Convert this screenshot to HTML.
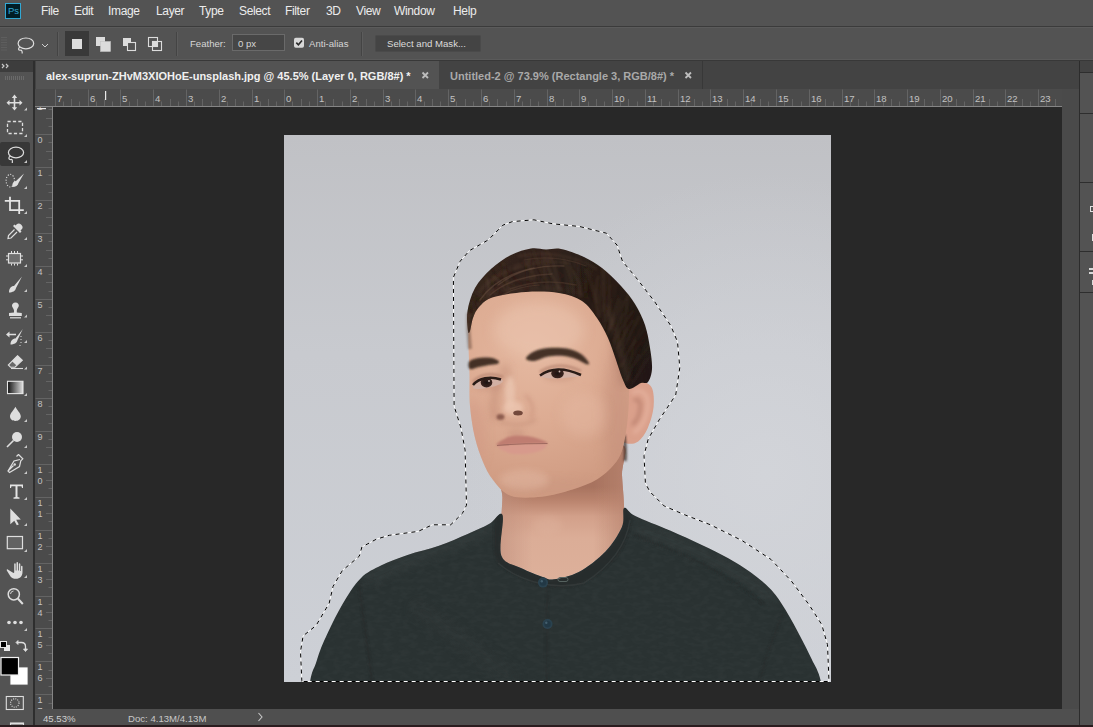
<!DOCTYPE html>
<html><head><meta charset="utf-8">
<style>
*{margin:0;padding:0;box-sizing:border-box}
html,body{width:1093px;height:727px;overflow:hidden;background:#535353;font-family:"Liberation Sans",sans-serif;position:relative}
.a{position:absolute}
.mi{position:absolute;top:4px;font-size:12px;letter-spacing:-0.35px;color:#ececec;white-space:pre;line-height:14px}
.t10{font-size:9.6px;white-space:pre;line-height:12px}
</style></head><body>
<!-- MENU BAR -->
<div class="a" style="left:0;top:0;width:1093px;height:26px;background:#535353"></div>
<div class="a" style="left:0;top:26px;width:1093px;height:1px;background:#3b3b3b"></div>
<div class="a" style="left:0;top:27px;width:1093px;height:1px;background:#5b5b5b"></div>
<div class="a" style="left:5px;top:3px;width:16px;height:16px;background:#001d26;border:1px solid #31a8d4"></div>
<div class="a" style="left:8px;top:5px;font-size:9.5px;color:#31a8d4;font-weight:400;line-height:11px">Ps</div>
<div class="mi" style="left:41px">File</div>
<div class="mi" style="left:74px">Edit</div>
<div class="mi" style="left:108px">Image</div>
<div class="mi" style="left:156px">Layer</div>
<div class="mi" style="left:199px">Type</div>
<div class="mi" style="left:239px">Select</div>
<div class="mi" style="left:285px">Filter</div>
<div class="mi" style="left:326px">3D</div>
<div class="mi" style="left:356px">View</div>
<div class="mi" style="left:394px">Window</div>
<div class="mi" style="left:453px">Help</div>

<!-- OPTIONS BAR -->
<svg class="a" style="left:0;top:27px" width="490" height="33" viewBox="0 27 490 33">
<g fill="#5e5e5e"><rect x="1" y="37" width="6" height="1"/><rect x="1" y="39.5" width="6" height="1"/><rect x="1" y="42" width="6" height="1"/><rect x="1" y="44.5" width="6" height="1"/><rect x="1" y="47" width="6" height="1"/><rect x="1" y="49.5" width="6" height="1"/></g>
<ellipse cx="25.9" cy="43.4" rx="7.8" ry="5.4" fill="none" stroke="#dedede" stroke-width="1.2"/>
<path d="M20,47 C17.8,48 18.2,50.5 20.5,50.2 C22,50 22.3,51.8 22.2,53.5" fill="none" stroke="#dedede" stroke-width="1.2"/>
<path d="M42,44 L45,47 L48,44" fill="none" stroke="#cfcfcf" stroke-width="1"/>
<rect x="57" y="32" width="1" height="24" fill="#444"/>
<rect x="58" y="32" width="1" height="24" fill="#5c5c5c"/>
<rect x="65" y="31" width="24" height="25" fill="#393939"/>
<rect x="72" y="39" width="10" height="10" fill="#dcdcdc"/>
<rect x="96" y="37" width="9" height="9" fill="#dcdcdc"/>
<rect x="100.5" y="41.5" width="10" height="10" fill="#dcdcdc" stroke="#c4c4c4" stroke-width="0.6"/>
<rect x="123" y="38" width="8" height="8" fill="#dcdcdc"/>
<rect x="127.5" y="42.5" width="8" height="8" fill="#535353" stroke="#dcdcdc" stroke-width="1.1"/>
<rect x="148.5" y="37.5" width="9" height="9" fill="none" stroke="#dcdcdc" stroke-width="1.1"/>
<rect x="152.5" y="41.5" width="9" height="9" fill="none" stroke="#dcdcdc" stroke-width="1.1"/>
<rect x="153" y="42" width="4" height="4" fill="#dcdcdc"/>
<rect x="176" y="32" width="1" height="24" fill="#444"/>
<rect x="177" y="32" width="1" height="24" fill="#5c5c5c"/>
<rect x="232.5" y="34.5" width="52" height="16" fill="#464646" stroke="#6a6a6a" stroke-width="1"/>
<rect x="294" y="37.8" width="10" height="10" rx="1.8" fill="#d8d8d8"/>
<path d="M296.3,42.6 L298.4,44.8 L302,40.5" fill="none" stroke="#2a2a2a" stroke-width="1.6"/>
<rect x="361" y="32" width="1" height="24" fill="#444"/>
<rect x="362" y="32" width="1" height="24" fill="#5c5c5c"/>
<rect x="375.5" y="35.5" width="105" height="16" rx="1" fill="#444444" stroke="#4a4a4a" stroke-width="1"/>
</svg>
<div class="a t10" style="left:190px;top:38px;color:#d6d6d6">Feather:</div>
<div class="a t10" style="left:238px;top:38px;color:#d6d6d6">0 px</div>
<div class="a t10" style="left:309px;top:38px;color:#d6d6d6">Anti-alias</div>
<div class="a t10" style="left:387px;top:38px;color:#dcdcdc">Select and Mask...</div>

<div class="a" style="left:0;top:59px;width:1093px;height:1px;background:#5a5a5a"></div>
<div class="a" style="left:0;top:60px;width:1093px;height:1px;background:#383838"></div>

<!-- TOOLBAR / LEFT PANEL -->
<div class="a" style="left:0;top:61px;width:33px;height:11px;background:#3f3f3f"></div>
<div class="a" style="left:33px;top:61px;width:2px;height:664px;background:#2e2e2e"></div>

<svg class="a" style="left:0;top:0" width="33" height="727" viewBox="0 0 33 727">
<defs>
<linearGradient id="gradtool" x1="0" y1="0" x2="1" y2="0"><stop offset="0" stop-color="#111"/><stop offset="1" stop-color="#e0e0e0"/></linearGradient>
<g id="tri"><path d="M0,3 L3,0 L3,3 Z" fill="#c8c8c8"/></g>
</defs>
<!-- panel header + grip -->
<rect x="0" y="61" width="33" height="11" fill="#3d3d3d"/>
<path d="M2,64 L4,66 L2,68 M6,64 L8,66 L6,68" stroke="#c8c8c8" stroke-width="1.2" fill="none"/>
<g fill="#6a6a6a"><rect x="5" y="76" width="1" height="4"/><rect x="7" y="76" width="1" height="4"/><rect x="9" y="76" width="1" height="4"/><rect x="11" y="76" width="1" height="4"/><rect x="13" y="76" width="1" height="4"/><rect x="15" y="76" width="1" height="4"/><rect x="17" y="76" width="1" height="4"/><rect x="19" y="76" width="1" height="4"/><rect x="21" y="76" width="1" height="4"/><rect x="23" y="76" width="1" height="4"/></g>
<g fill="#dedede" stroke="none">
<!-- move -->
<path d="M14.5,94.5 L11.8,98 L13.7,98 L13.7,102 L9.5,102 L9.5,100 L6.5,102.8 L9.5,105.6 L9.5,103.6 L13.7,103.6 L13.7,107.2 L11.8,107.2 L14.5,110.5 L17.2,107.2 L15.3,107.2 L15.3,103.6 L19.5,103.6 L19.5,105.6 L22.5,102.8 L19.5,100 L19.5,102 L15.3,102 L15.3,98 L17.2,98 Z"/>
</g>
<use href="#tri" x="24" y="107.5"/>
<!-- marquee -->
<rect x="7.5" y="121.5" width="15" height="12" fill="none" stroke="#dedede" stroke-width="1.3" stroke-dasharray="3.2 2.2"/>
<use href="#tri" x="24" y="134"/>
<!-- lasso selected -->
<rect x="0" y="142" width="30" height="24" rx="2" fill="#383838"/>
<ellipse cx="16" cy="152.5" rx="7.6" ry="5.3" fill="none" stroke="#dedede" stroke-width="1.2"/>
<path d="M10.5,156 C8,157 8.5,160 11,159.5 C12.5,159 12.5,161 12.3,163" fill="none" stroke="#dedede" stroke-width="1.2"/>
<use href="#tri" x="24" y="160"/>
<!-- quick select -->
<ellipse cx="10.3" cy="180.7" rx="4.2" ry="6.3" fill="none" stroke="#dedede" stroke-width="1.1" stroke-dasharray="1.1 1.6"/>
<path d="M24,173.5 L16,181 C13,181.5 12,184 12.5,187 C15.5,187 18,185.5 18.5,183 Z" fill="#dedede"/>
<use href="#tri" x="24" y="186"/>
<!-- crop -->
<path d="M4.8,200.8 L10,200.8 M10,196.8 L10,210.2 L20.8,210.2 M10,200.8 L19.2,200.8 L19.2,214 M19.2,210.2 L23.8,210.2" fill="none" stroke="#e4e4e4" stroke-width="1.8"/>
<use href="#tri" x="24" y="211"/>
<!-- eyedropper -->
<path d="M21.5,225 C23,226.5 23,228 21.5,229.5 L20.5,230.5 L21.5,231.5 L20,233 L13,226 L14.5,224.5 L15.5,225.5 L16.5,224.5 C18,223 19.5,223 21,224.5 Z" fill="#dedede"/>
<path d="M14.5,229.5 L8.5,235.5 L8,238.5 L11,238 L17,232" fill="none" stroke="#dedede" stroke-width="1.2"/>
<use href="#tri" x="24" y="237"/>
<!-- frame tool -->
<rect x="8.5" y="253.5" width="12" height="9.5" fill="#6e6e6e" stroke="#e0e0e0" stroke-width="1.2"/>
<path d="M11.5,251 V253 M14.5,251 V253 M17.5,251 V253 M11.5,263.5 V265.5 M14.5,263.5 V265.5 M17.5,263.5 V265.5 M6,256 H8 M6,259.8 H8 M21,256 H23 M21,259.8 H23" stroke="#e0e0e0" stroke-width="1"/>
<use href="#tri" x="24" y="264"/>
<!-- brush -->
<path d="M22,276.5 L14,286 C11,286 9,288.5 9,292.5 C12.5,292.5 15.5,291 16,288 Z" fill="#dedede"/>
<use href="#tri" x="24" y="289"/>
<!-- stamp -->
<path d="M15.5,302.5 C18,302.5 19,304.5 18.8,306 C18.5,307.5 17,308.5 16.8,310.5 L16.8,312.5 L21.8,313 L21.8,316 L9,316 L9,313 L14,312.5 L14,310.5 C13.8,308.5 12.2,307.5 12,306 C11.8,304.5 13,302.5 15.5,302.5 Z" fill="#dedede"/>
<rect x="10" y="317.2" width="11" height="1.2" fill="#dedede"/>
<use href="#tri" x="24" y="314.5"/>
<!-- history brush -->
<path d="M22.8,329 L15.5,338.5 C12.5,338.5 10.5,341 10.5,344.5 C14,344.5 17,343 17.5,340 Z" fill="#dedede"/>
<path d="M6,334.5 L9.5,331.5 L9.5,333.8 L16,333.8 L16,335.2 L9.5,335.2 L9.5,337.5 Z" fill="#dedede"/>
<path d="M21,336 V337 M21,339 V340 M21,342 V343 M20,345 V346" stroke="#dedede" stroke-width="1"/>
<use href="#tri" x="24" y="340"/>
<!-- eraser -->
<path d="M17.5,355.7 L22.3,360.2 L15,367.2 L10.5,367.2 L8.3,365 Z" fill="#6a6a6a" stroke="#dedede" stroke-width="1.1"/>
<path d="M17.5,355.7 L22.3,360.2 L16.5,365.6 L12,361.2 Z" fill="#dedede"/>
<path d="M11,368.5 L23,368.5" stroke="#dedede" stroke-width="1.1"/>
<use href="#tri" x="24" y="366.5"/>
<!-- gradient -->
<rect x="7.5" y="381.3" width="15.5" height="12.3" fill="url(#gradtool)" stroke="#e6e6e6" stroke-width="1.1"/>
<use href="#tri" x="24" y="393"/>
<!-- blur drop -->
<path d="M15.4,406.8 C17,410 20.8,413.5 20.8,416.3 C20.8,419.2 18.4,421 15.4,421 C12.4,421 10,419.2 10,416.3 C10,413.5 13.8,410 15.4,406.8 Z" fill="#dedede"/>
<use href="#tri" x="24" y="419"/>
<!-- dodge -->
<circle cx="17" cy="437" r="5" fill="#dedede"/>
<path d="M13.5,440.5 L7,447" stroke="#dedede" stroke-width="1.6"/>
<use href="#tri" x="24" y="445"/>
<!-- pen -->
<path d="M18.5,454.5 L22.8,458.8 L20.8,460.8 L19.5,466.5 L9.5,472.5 L8,471 L13.5,465.5 M8,471 L14,461 L20,459.5 M18.5,454.5 L16.5,456.5" fill="none" stroke="#dedede" stroke-width="1.2"/>
<circle cx="14.7" cy="464.5" r="1.2" fill="#dedede"/>
<use href="#tri" x="24" y="471"/>
<!-- type -->
<path d="M10,484.5 L23,484.5 L23,488 L22,488 L21.5,486.3 L17.5,486.3 L17.5,497 L19.5,497.5 L19.5,498.8 L13.5,498.8 L13.5,497.5 L15.5,497 L15.5,486.3 L11.5,486.3 L11,488 L10,488 Z" fill="#e4e4e4"/>
<use href="#tri" x="24" y="497"/>
<!-- path select -->
<path d="M10.3,508.5 L20.8,519.5 L16.2,519.8 L18.8,524.5 L16.8,525.3 L14.3,520.7 L10.3,524.2 Z" fill="#dedede"/>
<use href="#tri" x="24" y="523"/>
<!-- rectangle -->
<rect x="7.3" y="536.5" width="15.2" height="12.2" fill="#626262" stroke="#dedede" stroke-width="1.2"/>
<use href="#tri" x="24" y="549"/>
<!-- hand -->
<path d="M8.5,570 C7.5,568.8 6.5,569 6.8,570.5 L10.5,576.5 C11.8,578.2 13.5,578.8 16,578.8 C20,578.8 22.5,576.3 22.5,572 L22.5,566.5 C22.5,565.5 21,565.5 21,566.5 L21,571 L20.3,571 L20.3,564 C20.3,563 18.8,563 18.8,564 L18.8,570.5 L18,570.5 L18,562.8 C18,561.8 16.5,561.8 16.5,562.8 L16.5,570.5 L15.7,570.5 L15.7,564 C15.7,563 14.2,563 14.2,564 L14.2,572.5 L13.5,573 Z" fill="#dedede"/>
<use href="#tri" x="24" y="575"/>
<!-- zoom -->
<circle cx="13.8" cy="594.3" r="5.6" fill="none" stroke="#dedede" stroke-width="1.5"/>
<path d="M17.8,598.5 L22.8,604" stroke="#dedede" stroke-width="2"/>
<path d="M10.5,594 A3.3,3.3 0 0 1 13.5,591" fill="none" stroke="#dedede" stroke-width="0.9"/>
<!-- more -->
<circle cx="9" cy="622.5" r="1.8" fill="#dedede"/><circle cx="15" cy="622.5" r="1.8" fill="#dedede"/><circle cx="21" cy="622.5" r="1.8" fill="#dedede"/>
<use href="#tri" x="24" y="628"/>
<!-- default colors -->
<rect x="4" y="645" width="6" height="6" fill="#e8e8e8"/>
<rect x="0.5" y="641.5" width="6" height="6" fill="#000" stroke="#e8e8e8" stroke-width="1"/>
<!-- swap -->
<path d="M18,642.5 L21.5,642.5 Q25.5,642.5 25.5,646.5 L25.5,650" fill="none" stroke="#dedede" stroke-width="1.3"/>
<path d="M18,640.5 L16,642.5 L18,644.5 Z M23.5,649 L25.5,651.5 L27.5,649 Z" fill="#dedede" stroke="#dedede" stroke-width="0.8"/>
<!-- BG / FG -->
<rect x="10" y="667" width="18" height="18" fill="#ffffff" stroke="#5a5a5a" stroke-width="0.8"/>
<rect x="1" y="657.5" width="17.5" height="17.5" fill="#000" stroke="#f0f0f0" stroke-width="1.2"/>
<!-- quick mask -->
<rect x="6.3" y="696.5" width="17" height="13" fill="none" stroke="#dedede" stroke-width="1.1"/>
<circle cx="14.8" cy="703" r="4.2" fill="none" stroke="#dedede" stroke-width="1.1" stroke-dasharray="1 1.2"/>
<!-- bottom partial -->
<rect x="10.5" y="723" width="13" height="4" fill="none" stroke="#dedede" stroke-width="1.1"/>
<rect x="10.5" y="723" width="13" height="1.5" fill="#dedede"/>
</svg>

<!-- TAB BAR -->
<div class="a" style="left:35px;top:61px;width:1045px;height:28px;background:#434343"></div>
<div class="a" style="left:36px;top:61px;width:403px;height:28px;background:#535353"></div>
<div class="a" style="left:46px;top:70px;font-size:11px;font-weight:700;color:#f0f0f0;white-space:pre;line-height:13px">alex-suprun-ZHvM3XIOHoE-unsplash.jpg @ 45.5% (Layer 0, RGB/8#) *</div>
<div class="a" style="left:450px;top:70px;font-size:11px;font-weight:700;color:#a9a9a9;white-space:pre;line-height:13px">Untitled-2 @ 73.9% (Rectangle 3, RGB/8#) *</div>
<div class="a" style="left:702px;top:61px;width:1px;height:28px;background:#383838"></div>

<svg class="a" style="left:415px;top:66px" width="290" height="18" viewBox="415 66 290 18">
<path d="M422.5,72.5 L428,78 M428,72.5 L422.5,78" stroke="#bdbdbd" stroke-width="1.8"/>
<path d="M685.5,72.5 L691,78 M691,72.5 L685.5,78" stroke="#bdbdbd" stroke-width="1.8"/>
</svg>
<!-- RULERS -->
<!-- PASTEBOARD -->
<div class="a" style="left:53px;top:107px;width:1009px;height:602px;background:#282828"></div>
<!-- RULERS_GEN -->
<svg class="a" style="left:35px;top:89px" width="1027" height="18" viewBox="35 89 1027 18">
<rect x="35" y="89" width="1027" height="17" fill="#4b4b4b"/>
<rect x="35" y="106" width="1027" height="1" fill="#858585"/>
<path d="M55.5,89.5 V106 M63.5,101.5 V106 M71.5,99 V106 M79.5,101.5 V106 M88.5,89.5 V106 M96.5,101.5 V106 M104.5,99 V106 M112.5,101.5 V106 M120.5,89.5 V106 M129.5,101.5 V106 M137.5,99 V106 M145.5,101.5 V106 M153.5,89.5 V106 M161.5,101.5 V106 M170.5,99 V106 M178.5,101.5 V106 M186.5,89.5 V106 M194.5,101.5 V106 M202.5,99 V106 M211.5,101.5 V106 M219.5,89.5 V106 M227.5,101.5 V106 M235.5,99 V106 M243.5,101.5 V106 M252.5,89.5 V106 M260.5,101.5 V106 M268.5,99 V106 M276.5,101.5 V106 M284.5,89.5 V106 M292.5,101.5 V106 M301.5,99 V106 M309.5,101.5 V106 M317.5,89.5 V106 M325.5,101.5 V106 M333.5,99 V106 M342.5,101.5 V106 M350.5,89.5 V106 M358.5,101.5 V106 M366.5,99 V106 M374.5,101.5 V106 M383.5,89.5 V106 M391.5,101.5 V106 M399.5,99 V106 M407.5,101.5 V106 M415.5,89.5 V106 M424.5,101.5 V106 M432.5,99 V106 M440.5,101.5 V106 M448.5,89.5 V106 M456.5,101.5 V106 M465.5,99 V106 M473.5,101.5 V106 M481.5,89.5 V106 M489.5,101.5 V106 M497.5,99 V106 M506.5,101.5 V106 M514.5,89.5 V106 M522.5,101.5 V106 M530.5,99 V106 M538.5,101.5 V106 M547.5,89.5 V106 M555.5,101.5 V106 M563.5,99 V106 M571.5,101.5 V106 M579.5,89.5 V106 M588.5,101.5 V106 M596.5,99 V106 M604.5,101.5 V106 M612.5,89.5 V106 M620.5,101.5 V106 M628.5,99 V106 M637.5,101.5 V106 M645.5,89.5 V106 M653.5,101.5 V106 M661.5,99 V106 M669.5,101.5 V106 M678.5,89.5 V106 M686.5,101.5 V106 M694.5,99 V106 M702.5,101.5 V106 M710.5,89.5 V106 M719.5,101.5 V106 M727.5,99 V106 M735.5,101.5 V106 M743.5,89.5 V106 M751.5,101.5 V106 M760.5,99 V106 M768.5,101.5 V106 M776.5,89.5 V106 M784.5,101.5 V106 M792.5,99 V106 M801.5,101.5 V106 M809.5,89.5 V106 M817.5,101.5 V106 M825.5,99 V106 M833.5,101.5 V106 M842.5,89.5 V106 M850.5,101.5 V106 M858.5,99 V106 M866.5,101.5 V106 M874.5,89.5 V106 M883.5,101.5 V106 M891.5,99 V106 M899.5,101.5 V106 M907.5,89.5 V106 M915.5,101.5 V106 M924.5,99 V106 M932.5,101.5 V106 M940.5,89.5 V106 M948.5,101.5 V106 M956.5,99 V106 M964.5,101.5 V106 M973.5,89.5 V106 M981.5,101.5 V106 M989.5,99 V106 M997.5,101.5 V106 M1005.5,89.5 V106 M1014.5,101.5 V106 M1022.5,99 V106 M1030.5,101.5 V106 M1038.5,89.5 V106 M1046.5,101.5 V106 M1055.5,99 V106" stroke="#646464" stroke-width="1"/>
<text x="57" y="102" font-size="9.6" fill="#c2c2c2" font-family="Liberation Sans">7</text>
<text x="90" y="102" font-size="9.6" fill="#c2c2c2" font-family="Liberation Sans">6</text>
<text x="122" y="102" font-size="9.6" fill="#c2c2c2" font-family="Liberation Sans">5</text>
<text x="155" y="102" font-size="9.6" fill="#c2c2c2" font-family="Liberation Sans">4</text>
<text x="188" y="102" font-size="9.6" fill="#c2c2c2" font-family="Liberation Sans">3</text>
<text x="221" y="102" font-size="9.6" fill="#c2c2c2" font-family="Liberation Sans">2</text>
<text x="254" y="102" font-size="9.6" fill="#c2c2c2" font-family="Liberation Sans">1</text>
<text x="286" y="102" font-size="9.6" fill="#c2c2c2" font-family="Liberation Sans">0</text>
<text x="319" y="102" font-size="9.6" fill="#c2c2c2" font-family="Liberation Sans">1</text>
<text x="352" y="102" font-size="9.6" fill="#c2c2c2" font-family="Liberation Sans">2</text>
<text x="385" y="102" font-size="9.6" fill="#c2c2c2" font-family="Liberation Sans">3</text>
<text x="417" y="102" font-size="9.6" fill="#c2c2c2" font-family="Liberation Sans">4</text>
<text x="450" y="102" font-size="9.6" fill="#c2c2c2" font-family="Liberation Sans">5</text>
<text x="483" y="102" font-size="9.6" fill="#c2c2c2" font-family="Liberation Sans">6</text>
<text x="516" y="102" font-size="9.6" fill="#c2c2c2" font-family="Liberation Sans">7</text>
<text x="549" y="102" font-size="9.6" fill="#c2c2c2" font-family="Liberation Sans">8</text>
<text x="581" y="102" font-size="9.6" fill="#c2c2c2" font-family="Liberation Sans">9</text>
<text x="614" y="102" font-size="9.6" fill="#c2c2c2" font-family="Liberation Sans">10</text>
<text x="647" y="102" font-size="9.6" fill="#c2c2c2" font-family="Liberation Sans">11</text>
<text x="680" y="102" font-size="9.6" fill="#c2c2c2" font-family="Liberation Sans">12</text>
<text x="712" y="102" font-size="9.6" fill="#c2c2c2" font-family="Liberation Sans">13</text>
<text x="745" y="102" font-size="9.6" fill="#c2c2c2" font-family="Liberation Sans">14</text>
<text x="778" y="102" font-size="9.6" fill="#c2c2c2" font-family="Liberation Sans">15</text>
<text x="811" y="102" font-size="9.6" fill="#c2c2c2" font-family="Liberation Sans">16</text>
<text x="844" y="102" font-size="9.6" fill="#c2c2c2" font-family="Liberation Sans">17</text>
<text x="876" y="102" font-size="9.6" fill="#c2c2c2" font-family="Liberation Sans">18</text>
<text x="909" y="102" font-size="9.6" fill="#c2c2c2" font-family="Liberation Sans">19</text>
<text x="942" y="102" font-size="9.6" fill="#c2c2c2" font-family="Liberation Sans">20</text>
<text x="975" y="102" font-size="9.6" fill="#c2c2c2" font-family="Liberation Sans">21</text>
<text x="1007" y="102" font-size="9.6" fill="#c2c2c2" font-family="Liberation Sans">22</text>
<text x="1040" y="102" font-size="9.6" fill="#c2c2c2" font-family="Liberation Sans">23</text>
<rect x="105" y="91" width="1.2" height="9" fill="#e8e8e8"/>
</svg>
<svg class="a" style="left:35px;top:107px" width="18" height="602" viewBox="35 107 18 602">
<rect x="35" y="107" width="17" height="602" fill="#4b4b4b"/>
<rect x="52" y="107" width="1" height="602" fill="#858585"/>
<path d="M48.5,109.5 H52 M46,118.5 H52 M48.5,126.5 H52 M35.5,134.5 H52 M48.5,142.5 H52 M46,151.5 H52 M48.5,159.5 H52 M35.5,167.5 H52 M48.5,175.5 H52 M46,184.5 H52 M48.5,192.5 H52 M35.5,200.5 H52 M48.5,208.5 H52 M46,217.5 H52 M48.5,225.5 H52 M35.5,233.5 H52 M48.5,241.5 H52 M46,250.5 H52 M48.5,258.5 H52 M35.5,266.5 H52 M48.5,274.5 H52 M46,282.5 H52 M48.5,291.5 H52 M35.5,299.5 H52 M48.5,307.5 H52 M46,315.5 H52 M48.5,324.5 H52 M35.5,332.5 H52 M48.5,340.5 H52 M46,348.5 H52 M48.5,357.5 H52 M35.5,365.5 H52 M48.5,373.5 H52 M46,381.5 H52 M48.5,390.5 H52 M35.5,398.5 H52 M48.5,406.5 H52 M46,414.5 H52 M48.5,423.5 H52 M35.5,431.5 H52 M48.5,439.5 H52 M46,447.5 H52 M48.5,455.5 H52 M35.5,464.5 H52 M48.5,472.5 H52 M46,480.5 H52 M48.5,488.5 H52 M35.5,497.5 H52 M48.5,505.5 H52 M46,513.5 H52 M48.5,521.5 H52 M35.5,530.5 H52 M48.5,538.5 H52 M46,546.5 H52 M48.5,554.5 H52 M35.5,563.5 H52 M48.5,571.5 H52 M46,579.5 H52 M48.5,587.5 H52 M35.5,596.5 H52 M48.5,604.5 H52 M46,612.5 H52 M48.5,620.5 H52 M35.5,628.5 H52 M48.5,637.5 H52 M46,645.5 H52 M48.5,653.5 H52 M35.5,661.5 H52 M48.5,670.5 H52 M46,678.5 H52 M48.5,686.5 H52 M35.5,694.5 H52 M48.5,703.5 H52" stroke="#646464" stroke-width="1"/>
<text x="37.5" y="110.0" font-size="9" fill="#c2c2c2" font-family="Liberation Sans">1</text>
<text x="37.5" y="143.0" font-size="9" fill="#c2c2c2" font-family="Liberation Sans">0</text>
<text x="37.5" y="176.0" font-size="9" fill="#c2c2c2" font-family="Liberation Sans">1</text>
<text x="37.5" y="209.0" font-size="9" fill="#c2c2c2" font-family="Liberation Sans">2</text>
<text x="37.5" y="242.0" font-size="9" fill="#c2c2c2" font-family="Liberation Sans">3</text>
<text x="37.5" y="275.0" font-size="9" fill="#c2c2c2" font-family="Liberation Sans">4</text>
<text x="37.5" y="308.0" font-size="9" fill="#c2c2c2" font-family="Liberation Sans">5</text>
<text x="37.5" y="341.0" font-size="9" fill="#c2c2c2" font-family="Liberation Sans">6</text>
<text x="37.5" y="374.0" font-size="9" fill="#c2c2c2" font-family="Liberation Sans">7</text>
<text x="37.5" y="407.0" font-size="9" fill="#c2c2c2" font-family="Liberation Sans">8</text>
<text x="37.5" y="440.0" font-size="9" fill="#c2c2c2" font-family="Liberation Sans">9</text>
<text x="37.5" y="473.0" font-size="9" fill="#c2c2c2" font-family="Liberation Sans">1</text>
<text x="37.5" y="483.5" font-size="9" fill="#c2c2c2" font-family="Liberation Sans">0</text>
<text x="37.5" y="506.0" font-size="9" fill="#c2c2c2" font-family="Liberation Sans">1</text>
<text x="37.5" y="516.5" font-size="9" fill="#c2c2c2" font-family="Liberation Sans">1</text>
<text x="37.5" y="539.0" font-size="9" fill="#c2c2c2" font-family="Liberation Sans">1</text>
<text x="37.5" y="549.5" font-size="9" fill="#c2c2c2" font-family="Liberation Sans">2</text>
<text x="37.5" y="572.0" font-size="9" fill="#c2c2c2" font-family="Liberation Sans">1</text>
<text x="37.5" y="582.5" font-size="9" fill="#c2c2c2" font-family="Liberation Sans">3</text>
<text x="37.5" y="605.0" font-size="9" fill="#c2c2c2" font-family="Liberation Sans">1</text>
<text x="37.5" y="615.5" font-size="9" fill="#c2c2c2" font-family="Liberation Sans">4</text>
<text x="37.5" y="637.0" font-size="9" fill="#c2c2c2" font-family="Liberation Sans">1</text>
<text x="37.5" y="647.5" font-size="9" fill="#c2c2c2" font-family="Liberation Sans">5</text>
<text x="37.5" y="670.0" font-size="9" fill="#c2c2c2" font-family="Liberation Sans">1</text>
<text x="37.5" y="680.5" font-size="9" fill="#c2c2c2" font-family="Liberation Sans">6</text>
<text x="37.5" y="703.0" font-size="9" fill="#c2c2c2" font-family="Liberation Sans">1</text>
<text x="37.5" y="713.5" font-size="9" fill="#c2c2c2" font-family="Liberation Sans">7</text>
<rect x="37" y="108" width="9" height="1.2" fill="#e8e8e8"/>
</svg>
<!-- /RULERS_GEN -->



<!-- scroll col -->
<div class="a" style="left:1062px;top:89px;width:17px;height:620px;background:#4a4a4a"></div>
<div class="a" style="left:1079px;top:61px;width:1px;height:664px;background:#2c2c2c"></div>
<div class="a" style="left:1080px;top:61px;width:13px;height:664px;background:#535353"></div>
<div class="a" style="left:1080px;top:61px;width:13px;height:11px;background:#434343"></div>
<div class="a" style="left:1080px;top:72px;width:13px;height:1px;background:#2e2e2e"></div>
<div class="a" style="left:1080px;top:113px;width:13px;height:1px;background:#2e2e2e"></div>
<div class="a" style="left:1080px;top:182px;width:13px;height:1px;background:#2e2e2e"></div>
<div class="a" style="left:1080px;top:251px;width:13px;height:1px;background:#2e2e2e"></div>
<div class="a" style="left:1080px;top:292px;width:13px;height:1px;background:#2e2e2e"></div>
<div class="a" style="left:1090px;top:206px;width:3px;height:6px;border:1.2px solid #e0e0e0;border-right:none"></div>
<div class="a" style="left:1092px;top:234px;width:1px;height:7px;background:#e0e0e0"></div>
<div class="a" style="left:1089px;top:268px;width:4px;height:1.5px;background:#d8d8d8"></div>
<div class="a" style="left:1089px;top:272px;width:4px;height:1.5px;background:#d8d8d8"></div>
<div class="a" style="left:1092px;top:280px;width:1px;height:5px;background:#d8d8d8"></div>

<!-- STATUS BAR -->
<div class="a" style="left:35px;top:709px;width:1044px;height:16px;background:#4f4f4f"></div>
<div class="a" style="left:0;top:725px;width:1093px;height:2px;background:#2a1c1e"></div>
<div class="a t10" style="left:43px;top:713px;color:#d0d0d0">45.53%</div>
<div class="a t10" style="left:128px;top:713px;color:#c8c8c8">Doc: 4.13M/4.13M</div>

<svg class="a" style="left:250px;top:709px" width="30" height="16" viewBox="250 709 30 16">
<path d="M258.5,713 L262,717 L258.5,721" fill="none" stroke="#c8c8c8" stroke-width="1.1"/>
</svg>
<!-- PHOTO -->
<svg class="a" style="left:284px;top:135px" width="547" height="547" viewBox="0 0 547 547">
<defs>
<linearGradient id="bg" x1="0" y1="0" x2="0" y2="1">
<stop offset="0" stop-color="#c0c1c5"/><stop offset="0.4" stop-color="#c8cacf"/><stop offset="1" stop-color="#cdd0d6"/>
</linearGradient>
<radialGradient id="bgr" cx="0.88" cy="0.62" r="0.55">
<stop offset="0" stop-color="#d3d5da" stop-opacity="0.9"/><stop offset="1" stop-color="#d3d5da" stop-opacity="0"/>
</radialGradient>
<linearGradient id="neckg" gradientUnits="userSpaceOnUse" x1="0" y1="352" x2="0" y2="444">
<stop offset="0" stop-color="#a8735f"/><stop offset="0.15" stop-color="#ba846e"/><stop offset="0.32" stop-color="#d2a08a"/><stop offset="0.55" stop-color="#dbad97"/><stop offset="1" stop-color="#ddb09a"/>
</linearGradient>
<linearGradient id="neckside" gradientUnits="userSpaceOnUse" x1="218" y1="0" x2="340" y2="0">
<stop offset="0" stop-color="#c0907d" stop-opacity="0.6"/><stop offset="0.25" stop-color="#c0907d" stop-opacity="0"/><stop offset="0.75" stop-color="#b98570" stop-opacity="0"/><stop offset="1" stop-color="#b98570" stop-opacity="0.7"/>
</linearGradient>
<radialGradient id="faceg" gradientUnits="userSpaceOnUse" cx="250" cy="215" r="140">
<stop offset="0" stop-color="#e5b9a1"/><stop offset="0.5" stop-color="#ddac93"/><stop offset="1" stop-color="#d09c83"/>
</radialGradient>
<linearGradient id="hairg" gradientUnits="userSpaceOnUse" x1="200" y1="120" x2="360" y2="240">
<stop offset="0" stop-color="#36261f"/><stop offset="0.5" stop-color="#2b1f19"/><stop offset="1" stop-color="#231914"/>
</linearGradient>
<radialGradient id="eyeg"><stop offset="0" stop-color="#1e1210"/><stop offset="1" stop-color="#3a2520"/></radialGradient>
<clipPath id="faceclip"><path d="M186.0,185.0 C182.8,198.3 185.5,225.7 185.5,240.0 C185.5,254.3 185.1,260.7 186.0,271.0 C186.9,281.3 188.6,292.7 190.8,302.0 C193.0,311.3 196.0,319.8 199.0,327.0 C202.0,334.2 204.4,339.4 209.0,345.0 C213.6,350.6 218.5,357.9 226.6,360.7 C234.7,363.5 247.3,362.7 257.6,361.7 C267.9,360.7 279.2,357.4 288.5,354.5 C297.8,351.6 306.4,348.3 313.3,344.2 C320.2,340.1 325.7,334.6 329.8,329.8 C333.9,325.0 335.8,321.9 338.0,315.3 C340.2,308.7 341.8,299.2 343.0,290.0 C344.2,280.8 344.8,272.5 345.0,260.0 C345.2,247.5 346.5,230.0 344.0,215.0 C341.5,200.0 342.3,180.8 330.0,170.0 C317.7,159.2 290.8,151.7 270.0,150.0 C249.2,148.3 219.0,154.2 205.0,160.0 C191.0,165.8 189.2,171.7 186.0,185.0 Z"/></clipPath>
<clipPath id="shirtclip"><path d="M20.0,600.0 C-22.3,587.8 24.0,559.0 26.0,547.0 C28.0,535.0 29.7,534.8 32.0,528.0 C34.3,521.2 35.6,515.9 40.0,506.1 C44.4,496.4 52.2,479.9 58.3,469.5 C64.4,459.1 70.1,449.9 76.6,443.4 C83.1,436.9 89.7,434.2 97.5,430.3 C105.3,426.4 114.0,423.2 123.6,419.9 C133.2,416.6 145.0,414.2 155.0,410.7 C165.0,407.2 175.4,402.6 183.7,399.0 C192.0,395.4 199.2,392.2 205.0,389.0 C210.8,385.8 216.4,374.8 218.5,380.0 C220.6,385.2 214.2,411.7 217.3,420.5 C220.4,429.3 229.9,429.3 237.0,432.9 C244.1,436.5 254.1,440.3 259.6,442.2 C265.1,444.1 264.1,445.2 270.0,444.3 C275.9,443.4 286.1,441.6 294.7,437.0 C303.3,432.4 314.3,423.9 321.5,416.4 C328.7,408.8 334.9,398.9 338.0,391.7 C341.1,384.5 337.9,374.9 340.1,373.1 C342.3,371.3 343.7,377.4 351.3,381.1 C358.9,384.9 374.9,390.8 386.0,395.6 C397.1,400.4 408.2,405.4 417.8,410.0 C427.4,414.6 435.6,418.4 443.8,423.0 C452.0,427.6 459.7,432.2 466.9,437.5 C474.1,442.8 481.3,448.6 487.1,454.8 C492.9,461.1 496.8,467.3 501.6,475.0 C506.4,482.7 511.7,492.8 516.0,501.0 C520.3,509.2 524.1,516.4 527.6,524.1 C531.1,531.8 534.1,534.4 537.0,547.0 C539.9,559.6 587.8,587.8 545.0,600.0 C502.2,612.2 367.5,620.0 280.0,620.0 C192.5,620.0 62.3,612.2 20.0,600.0 Z"/></clipPath>
<clipPath id="hairclip"><path d="M184.0,196.0 C183.6,192.7 182.3,183.2 183.5,176.0 C184.7,168.8 187.1,160.0 191.0,153.0 C194.9,146.0 201.0,139.5 207.0,134.0 C213.0,128.5 220.3,123.4 227.0,120.0 C233.7,116.6 241.2,114.4 247.0,113.5 C252.8,112.6 257.0,114.4 262.0,114.5 C267.0,114.6 270.7,112.8 277.0,114.0 C283.3,115.2 293.2,118.8 300.0,122.0 C306.8,125.2 311.8,128.2 318.0,133.0 C324.2,137.8 331.5,145.0 337.0,151.0 C342.5,157.0 347.0,162.5 351.0,169.0 C355.0,175.5 358.5,182.7 361.0,190.0 C363.5,197.3 364.8,205.7 366.0,213.0 C367.2,220.3 368.3,228.3 368.0,234.0 C367.7,239.7 365.8,244.7 364.0,247.0 C362.2,249.3 360.2,246.8 357.0,248.0 C353.8,249.2 348.0,254.5 345.0,254.0 C342.0,253.5 341.2,249.8 339.0,245.0 C336.8,240.2 334.5,232.0 332.0,225.0 C329.5,218.0 327.2,210.0 324.0,203.0 C320.8,196.0 317.3,189.2 313.0,183.0 C308.7,176.8 304.3,170.2 298.0,166.0 C291.7,161.8 284.3,159.5 275.0,158.0 C265.7,156.5 253.0,156.3 242.0,157.0 C231.0,157.7 216.8,159.7 209.0,162.2 C201.2,164.7 198.3,168.5 195.0,172.0 C191.7,175.5 190.5,179.0 189.0,183.0 C187.5,187.0 186.8,193.8 186.0,196.0 C185.2,198.2 184.4,199.3 184.0,196.0 Z"/></clipPath>
<filter id="noise" x="0" y="0" width="100%" height="100%"><feTurbulence type="fractalNoise" baseFrequency="0.12 0.25" numOctaves="2" seed="3"/><feColorMatrix type="matrix" values="0 0 0 0 0.5  0 0 0 0 0.55  0 0 0 0 0.56  0 0 0 1.6 -0.55"/></filter>
<filter id="b05" x="-20%" y="-20%" width="140%" height="140%"><feGaussianBlur stdDeviation="0.5"/></filter>
<filter id="b1" filterUnits="userSpaceOnUse" x="-20" y="-20" width="587" height="587"><feGaussianBlur stdDeviation="0.8"/></filter>
<filter id="b2" filterUnits="userSpaceOnUse" x="-20" y="-20" width="587" height="587"><feGaussianBlur stdDeviation="2"/></filter>
<filter id="b3" filterUnits="userSpaceOnUse" x="-20" y="-20" width="587" height="587"><feGaussianBlur stdDeviation="3.5"/></filter>
<filter id="b4" filterUnits="userSpaceOnUse" x="-20" y="-20" width="587" height="587"><feGaussianBlur stdDeviation="6"/></filter>
</defs>
<rect width="547" height="547" fill="url(#bg)"/>
<rect width="547" height="547" fill="url(#bgr)"/>
<!-- neck -->
<path d="M218.4,340.0 C208.1,343.0 218.6,349.4 218.4,362.8 C218.2,376.2 214.2,408.8 217.3,420.5 C220.4,432.2 229.9,429.3 237.0,432.9 C244.1,436.5 254.1,440.3 259.6,442.2 C265.1,444.1 264.1,445.2 270.0,444.3 C275.9,443.4 286.1,441.6 294.7,437.0 C303.3,432.4 314.3,423.9 321.5,416.4 C328.7,408.8 334.9,398.9 338.0,391.7 C341.1,384.5 340.1,381.7 340.1,373.1 C340.1,364.5 338.5,350.5 338.0,340.0 C337.5,329.5 346.7,309.2 337.0,310.0 C327.3,310.8 299.8,340.0 280.0,345.0 C260.2,350.0 228.7,337.0 218.4,340.0 Z" fill="url(#neckg)" filter="url(#b05)"/>
<path d="M218.4,340.0 C208.1,343.0 218.6,349.4 218.4,362.8 C218.2,376.2 214.2,408.8 217.3,420.5 C220.4,432.2 229.9,429.3 237.0,432.9 C244.1,436.5 254.1,440.3 259.6,442.2 C265.1,444.1 264.1,445.2 270.0,444.3 C275.9,443.4 286.1,441.6 294.7,437.0 C303.3,432.4 314.3,423.9 321.5,416.4 C328.7,408.8 334.9,398.9 338.0,391.7 C341.1,384.5 340.1,381.7 340.1,373.1 C340.1,364.5 338.5,350.5 338.0,340.0 C337.5,329.5 346.7,309.2 337.0,310.0 C327.3,310.8 299.8,340.0 280.0,345.0 C260.2,350.0 228.7,337.0 218.4,340.0 Z" fill="url(#neckside)" filter="url(#b05)"/>
<ellipse cx="264" cy="390" rx="14" ry="9" fill="#e2b8a3" opacity="0.3" filter="url(#b3)"/>
<!-- ear -->
<path d="M340.7,266.0 C341.7,258.0 342.0,255.7 344.6,252.5 C347.2,249.3 352.2,246.7 356.1,246.7 C360.0,246.7 365.4,248.3 367.7,252.5 C369.9,256.7 370.2,265.1 369.6,271.8 C369.0,278.5 366.4,287.1 363.8,292.9 C361.2,298.7 357.7,303.8 354.2,306.4 C350.7,309.0 345.2,309.3 342.6,308.4 C340.0,307.4 339.1,307.8 338.8,300.7 C338.5,293.6 339.7,274.0 340.7,266.0 Z" fill="#daa08b" filter="url(#b05)"/>
<path d="M348,258 C357,253 364,258 364,270 C363,282 358,292 350,298" stroke="#e6b4a0" stroke-width="3" fill="none" filter="url(#b2)"/>
<path d="M350,266 C354,262 357,266 356,274 C355,282 352,287 348,290" stroke="#b57c6a" stroke-width="2.5" fill="none" filter="url(#b2)"/>
<path d="M340,300 C341,308 342,316 341,326" stroke="#3a2a24" stroke-width="3" fill="none" opacity="0.8" filter="url(#b1)"/>
<!-- face -->
<path d="M186.0,185.0 C182.8,198.3 185.5,225.7 185.5,240.0 C185.5,254.3 185.1,260.7 186.0,271.0 C186.9,281.3 188.6,292.7 190.8,302.0 C193.0,311.3 196.0,319.8 199.0,327.0 C202.0,334.2 204.4,339.4 209.0,345.0 C213.6,350.6 218.5,357.9 226.6,360.7 C234.7,363.5 247.3,362.7 257.6,361.7 C267.9,360.7 279.2,357.4 288.5,354.5 C297.8,351.6 306.4,348.3 313.3,344.2 C320.2,340.1 325.7,334.6 329.8,329.8 C333.9,325.0 335.8,321.9 338.0,315.3 C340.2,308.7 341.8,299.2 343.0,290.0 C344.2,280.8 344.8,272.5 345.0,260.0 C345.2,247.5 346.5,230.0 344.0,215.0 C341.5,200.0 342.3,180.8 330.0,170.0 C317.7,159.2 290.8,151.7 270.0,150.0 C249.2,148.3 219.0,154.2 205.0,160.0 C191.0,165.8 189.2,171.7 186.0,185.0 Z" fill="url(#faceg)" filter="url(#b05)"/>
<g clip-path="url(#faceclip)">
<ellipse cx="334" cy="280" rx="14" ry="70" fill="#c48f7a" opacity="0.55" filter="url(#b4)"/>
<ellipse cx="190" cy="300" rx="10" ry="35" fill="#d09684" opacity="0.45" filter="url(#b4)"/>
<ellipse cx="255" cy="195" rx="45" ry="28" fill="#ebc6b1" opacity="0.5" filter="url(#b4)"/>
<ellipse cx="300" cy="280" rx="22" ry="22" fill="#e6bba6" opacity="0.4" filter="url(#b4)"/>
<ellipse cx="270" cy="352" rx="55" ry="9" fill="#c8957f" opacity="0.3" filter="url(#b3)"/>
<ellipse cx="240" cy="345" rx="25" ry="10" fill="#ebc6b2" opacity="0.35" filter="url(#b3)"/>
<path d="M318,165 C330,190 336,220 340,250" stroke="#a87562" stroke-width="8" fill="none" opacity="0.45" filter="url(#b3)"/>
<!-- eye sockets -->
<ellipse cx="203" cy="250" rx="14" ry="7" fill="#c9947f" opacity="0.45" filter="url(#b2)"/>
<ellipse cx="221" cy="238" rx="6" ry="9" fill="#c08a74" opacity="0.4" filter="url(#b3)"/>
<ellipse cx="275" cy="240" rx="17" ry="7" fill="#c9947f" opacity="0.45" filter="url(#b2)"/>
<!-- nose -->
<path d="M215,248 C210,260 208,273 212,285" stroke="#b07764" stroke-width="7" fill="none" opacity="0.35" filter="url(#b3)"/>
<ellipse cx="226" cy="258" rx="5" ry="17" fill="#eecdb9" opacity="0.6" filter="url(#b2)"/>
<ellipse cx="229" cy="273" rx="10" ry="7" fill="#edc7b2" opacity="0.75" filter="url(#b2)"/>
<path d="M241,260 C249,267 251,276 246,283" stroke="#c48b76" stroke-width="3" fill="none" opacity="0.5" filter="url(#b2)"/>
<ellipse cx="234" cy="278" rx="4.8" ry="2.5" fill="#603629" opacity="0.85" filter="url(#b05)"/>
<ellipse cx="216.5" cy="282" rx="4" ry="3" fill="#74443a" opacity="0.75" filter="url(#b1)"/>
<path d="M216,287 C230,291 245,290 252,284" stroke="#b98470" stroke-width="3" fill="none" opacity="0.4" filter="url(#b2)"/>
<ellipse cx="232" cy="298" rx="9" ry="4" fill="#c48f7a" opacity="0.4" filter="url(#b2)"/>
</g>
<!-- hair -->
<path d="M184.0,196.0 C183.6,192.7 182.3,183.2 183.5,176.0 C184.7,168.8 187.1,160.0 191.0,153.0 C194.9,146.0 201.0,139.5 207.0,134.0 C213.0,128.5 220.3,123.4 227.0,120.0 C233.7,116.6 241.2,114.4 247.0,113.5 C252.8,112.6 257.0,114.4 262.0,114.5 C267.0,114.6 270.7,112.8 277.0,114.0 C283.3,115.2 293.2,118.8 300.0,122.0 C306.8,125.2 311.8,128.2 318.0,133.0 C324.2,137.8 331.5,145.0 337.0,151.0 C342.5,157.0 347.0,162.5 351.0,169.0 C355.0,175.5 358.5,182.7 361.0,190.0 C363.5,197.3 364.8,205.7 366.0,213.0 C367.2,220.3 368.3,228.3 368.0,234.0 C367.7,239.7 365.8,244.7 364.0,247.0 C362.2,249.3 360.2,246.8 357.0,248.0 C353.8,249.2 348.0,254.5 345.0,254.0 C342.0,253.5 341.2,249.8 339.0,245.0 C336.8,240.2 334.5,232.0 332.0,225.0 C329.5,218.0 327.2,210.0 324.0,203.0 C320.8,196.0 317.3,189.2 313.0,183.0 C308.7,176.8 304.3,170.2 298.0,166.0 C291.7,161.8 284.3,159.5 275.0,158.0 C265.7,156.5 253.0,156.3 242.0,157.0 C231.0,157.7 216.8,159.7 209.0,162.2 C201.2,164.7 198.3,168.5 195.0,172.0 C191.7,175.5 190.5,179.0 189.0,183.0 C187.5,187.0 186.8,193.8 186.0,196.0 C185.2,198.2 184.4,199.3 184.0,196.0 Z" fill="url(#hairg)" filter="url(#b05)"/>
<g clip-path="url(#hairclip)" fill="none" stroke-linecap="round">
<path d="M196,156 C212,136 238,126 268,124" stroke="#5a4234" stroke-width="4" opacity="0.27" filter="url(#b1)"/>
<path d="M205,148 C225,132 255,125 285,128" stroke="#614838" stroke-width="2.5" opacity="0.27" filter="url(#b1)"/>
<path d="M190,175 C200,158 220,146 250,142" stroke="#5a4234" stroke-width="3" opacity="0.30" filter="url(#b1)"/>
<path d="M235,121 C260,116 290,120 312,134" stroke="#5e4536" stroke-width="3" opacity="0.27" filter="url(#b1)"/>
<path d="M300,132 C320,145 340,165 352,190" stroke="#271b15" stroke-width="9" opacity="0.27" filter="url(#b2)"/>
<path d="M330,170 C345,195 355,220 358,245" stroke="#2a1d17" stroke-width="8" opacity="0.24" filter="url(#b2)"/>
<path d="M322,172 C332,195 338,220 344,245" stroke="#6e5244" stroke-width="6" opacity="0.21" filter="url(#b2)"/>
<path d="M205,158 C230,152 265,150 295,158" stroke="#5c4437" stroke-width="5" opacity="0.27" filter="url(#b2)"/>
<path d="M188,195 C190,180 196,170 206,162" stroke="#6a4e40" stroke-width="3" opacity="0.24" filter="url(#b1)"/>
<g filter="url(#b1)"><path d="M185.8,196.0 Q187.8,192.6 184.8,196.0" stroke="#1a120e" stroke-width="1.1" opacity="0.22"/>
<path d="M185.7,196.0 Q182.0,194.5 184.7,196.0" stroke="#1a120e" stroke-width="1.2" opacity="0.16"/>
<path d="M187.6,187.8 Q190.1,187.1 185.0,193.8" stroke="#54402f" stroke-width="1.4" opacity="0.15"/>
<path d="M186.0,193.5 Q183.4,180.9 185.9,169.4" stroke="#4a372b" stroke-width="1.3" opacity="0.14"/>
<path d="M186.0,195.4 Q187.9,183.2 187.0,173.9" stroke="#1f1511" stroke-width="1.7" opacity="0.30"/>
<path d="M187.2,189.2 Q188.3,184.9 185.0,187.6" stroke="#1f1511" stroke-width="1.8" opacity="0.30"/>
<path d="M188.1,182.6 Q187.0,179.5 185.7,182.3" stroke="#1f1511" stroke-width="1.2" opacity="0.22"/>
<path d="M186.1,193.4 Q188.3,192.4 184.4,195.5" stroke="#4a372b" stroke-width="1.5" opacity="0.22"/>
<path d="M189.0,182.7 Q186.2,187.2 183.7,191.6" stroke="#5e4638" stroke-width="2.1" opacity="0.18"/>
<path d="M192.0,175.7 Q191.6,167.5 188.5,167.0" stroke="#241914" stroke-width="1.5" opacity="0.24"/>
<path d="M191.8,177.8 Q190.9,181.0 186.2,187.4" stroke="#241914" stroke-width="1.1" opacity="0.21"/>
<path d="M191.5,173.6 Q191.1,170.9 184.8,173.0" stroke="#241914" stroke-width="2.5" opacity="0.26"/>
<path d="M193.6,173.8 Q188.4,170.9 187.5,173.2" stroke="#241914" stroke-width="2.2" opacity="0.16"/>
<path d="M192.0,177.2 Q189.5,179.1 185.1,185.1" stroke="#54402f" stroke-width="2.0" opacity="0.22"/>
<path d="M196.8,171.7 Q194.0,179.2 183.9,186.6" stroke="#1a120e" stroke-width="1.6" opacity="0.20"/>
<path d="M190.7,175.1 Q187.1,167.0 190.4,164.4" stroke="#54402f" stroke-width="1.2" opacity="0.24"/>
<path d="M190.9,177.7 Q191.6,179.1 185.0,181.2" stroke="#5e4638" stroke-width="2.3" opacity="0.24"/>
<path d="M192.1,171.0 Q190.0,164.9 188.2,165.4" stroke="#241914" stroke-width="2.5" opacity="0.21"/>
<path d="M201.3,167.1 Q196.1,162.4 193.4,162.4" stroke="#4a372b" stroke-width="1.2" opacity="0.12"/>
<path d="M203.8,164.9 Q194.4,160.1 192.5,156.9" stroke="#4a372b" stroke-width="2.3" opacity="0.26"/>
<path d="M201.6,164.4 Q203.7,156.0 201.5,149.3" stroke="#1a120e" stroke-width="1.5" opacity="0.16"/>
<path d="M196.4,166.9 Q190.8,162.7 189.5,160.3" stroke="#1f1511" stroke-width="2.1" opacity="0.32"/>
<path d="M204.2,163.5 Q206.6,151.8 201.7,142.8" stroke="#4a372b" stroke-width="2.5" opacity="0.31"/>
<path d="M203.3,165.3 Q195.5,162.1 192.5,164.5" stroke="#1a120e" stroke-width="2.5" opacity="0.24"/>
<path d="M202.4,159.1 Q204.2,152.8 203.7,144.5" stroke="#5e4638" stroke-width="2.4" opacity="0.28"/>
<path d="M204.4,157.8 Q205.5,146.9 204.4,142.9" stroke="#4a372b" stroke-width="1.6" opacity="0.20"/>
<path d="M203.8,164.7 Q197.4,161.8 196.6,156.1" stroke="#4a372b" stroke-width="1.2" opacity="0.29"/>
<path d="M213.0,160.5 Q204.3,153.0 203.3,143.8" stroke="#4a372b" stroke-width="2.0" opacity="0.23"/>
<path d="M208.5,154.6 Q210.4,145.9 206.2,144.9" stroke="#54402f" stroke-width="1.4" opacity="0.17"/>
<path d="M218.8,158.9 Q209.2,153.3 205.4,144.8" stroke="#1f1511" stroke-width="2.3" opacity="0.25"/>
<path d="M219.7,153.4 Q210.7,140.5 207.6,133.8" stroke="#1a120e" stroke-width="1.0" opacity="0.21"/>
<path d="M213.6,161.4 Q213.5,143.1 218.7,127.1" stroke="#4a372b" stroke-width="1.2" opacity="0.13"/>
<path d="M225.7,153.7 Q219.3,139.9 219.3,127.2" stroke="#54402f" stroke-width="1.3" opacity="0.13"/>
<path d="M214.3,156.6 Q218.7,144.5 216.9,139.5" stroke="#1f1511" stroke-width="1.9" opacity="0.22"/>
<path d="M225.0,154.3 Q217.5,146.7 209.5,141.3" stroke="#54402f" stroke-width="2.0" opacity="0.30"/>
<path d="M223.4,150.0 Q222.8,140.7 223.0,134.4" stroke="#241914" stroke-width="1.7" opacity="0.13"/>
<path d="M223.6,159.1 Q223.8,145.5 219.4,129.0" stroke="#54402f" stroke-width="2.4" opacity="0.25"/>
<path d="M225.3,157.7 Q218.4,151.6 212.1,144.6" stroke="#5e4638" stroke-width="1.6" opacity="0.22"/>
<path d="M222.9,153.9 Q214.0,141.7 206.6,132.4" stroke="#1f1511" stroke-width="1.5" opacity="0.26"/>
<path d="M222.9,154.2 Q217.5,141.4 219.9,132.6" stroke="#1a120e" stroke-width="1.4" opacity="0.31"/>
<path d="M223.6,150.3 Q219.6,141.0 219.3,139.3" stroke="#54402f" stroke-width="1.4" opacity="0.15"/>
<path d="M234.9,153.9 Q228.5,141.3 221.8,130.7" stroke="#1f1511" stroke-width="1.1" opacity="0.13"/>
<path d="M231.8,148.1 Q226.3,136.0 228.5,130.9" stroke="#1f1511" stroke-width="1.1" opacity="0.29"/>
<path d="M227.4,150.2 Q223.0,140.5 221.2,132.1" stroke="#1f1511" stroke-width="1.9" opacity="0.13"/>
<path d="M229.6,150.0 Q221.5,145.9 218.6,138.5" stroke="#4a372b" stroke-width="1.5" opacity="0.27"/>
<path d="M239.7,151.3 Q237.1,136.8 236.9,130.1" stroke="#1f1511" stroke-width="1.1" opacity="0.12"/>
<path d="M248.7,144.7 Q244.9,131.9 245.2,121.7" stroke="#4a372b" stroke-width="2.2" opacity="0.21"/>
<path d="M246.5,146.5 Q245.7,135.3 244.8,124.0" stroke="#54402f" stroke-width="1.5" opacity="0.29"/>
<path d="M242.6,144.8 Q243.8,125.6 239.5,114.1" stroke="#4a372b" stroke-width="2.1" opacity="0.17"/>
<path d="M243.1,156.3 Q232.4,142.7 215.7,128.9" stroke="#1f1511" stroke-width="1.9" opacity="0.26"/>
<path d="M244.1,154.6 Q241.7,138.4 247.3,125.7" stroke="#1f1511" stroke-width="2.5" opacity="0.23"/>
<path d="M239.0,148.0 Q231.5,137.0 226.3,133.9" stroke="#241914" stroke-width="1.1" opacity="0.18"/>
<path d="M248.3,151.2 Q243.0,138.7 241.4,133.2" stroke="#241914" stroke-width="1.9" opacity="0.20"/>
<path d="M251.3,149.5 Q251.8,141.3 244.9,130.9" stroke="#54402f" stroke-width="2.0" opacity="0.26"/>
<path d="M260.7,147.6 Q255.2,130.0 249.8,116.9" stroke="#1a120e" stroke-width="2.0" opacity="0.13"/>
<path d="M260.8,148.0 Q252.1,130.7 249.2,115.1" stroke="#1a120e" stroke-width="1.9" opacity="0.28"/>
<path d="M257.2,147.1 Q265.3,132.3 266.1,117.8" stroke="#5e4638" stroke-width="1.0" opacity="0.15"/>
<path d="M257.5,153.2 Q243.5,135.9 236.8,126.4" stroke="#1a120e" stroke-width="2.0" opacity="0.22"/>
<path d="M258.7,147.2 Q260.5,131.4 262.2,117.2" stroke="#4a372b" stroke-width="1.8" opacity="0.27"/>
<path d="M263.0,147.1 Q253.9,131.3 249.0,114.5" stroke="#54402f" stroke-width="2.1" opacity="0.32"/>
<path d="M270.8,156.9 Q264.9,131.8 262.4,114.1" stroke="#4a372b" stroke-width="2.0" opacity="0.14"/>
<path d="M263.8,154.4 Q259.5,135.1 258.3,117.1" stroke="#5e4638" stroke-width="1.7" opacity="0.22"/>
<path d="M262.0,148.8 Q259.2,136.0 256.2,125.7" stroke="#241914" stroke-width="2.2" opacity="0.32"/>
<path d="M275.4,154.7 Q268.5,140.2 262.1,130.2" stroke="#5e4638" stroke-width="2.2" opacity="0.31"/>
<path d="M275.9,153.8 Q272.6,130.3 262.3,113.9" stroke="#5e4638" stroke-width="1.2" opacity="0.22"/>
<path d="M270.6,150.0 Q261.4,131.2 255.7,119.0" stroke="#1f1511" stroke-width="1.3" opacity="0.30"/>
<path d="M280.9,159.7 Q279.5,144.7 278.2,132.4" stroke="#1f1511" stroke-width="2.1" opacity="0.20"/>
<path d="M280.6,158.4 Q275.9,140.1 274.1,125.7" stroke="#241914" stroke-width="1.2" opacity="0.31"/>
<path d="M273.9,154.7 Q271.0,143.8 269.9,130.5" stroke="#5e4638" stroke-width="1.5" opacity="0.21"/>
<path d="M278.2,156.1 Q270.8,143.4 260.8,131.1" stroke="#54402f" stroke-width="1.4" opacity="0.17"/>
<path d="M289.7,160.6 Q288.4,144.3 279.7,125.5" stroke="#4a372b" stroke-width="1.6" opacity="0.30"/>
<path d="M290.5,160.7 Q293.7,146.2 290.0,134.8" stroke="#1a120e" stroke-width="2.1" opacity="0.25"/>
<path d="M287.4,161.6 Q285.5,138.5 289.7,117.6" stroke="#1f1511" stroke-width="1.4" opacity="0.17"/>
<path d="M286.9,153.3 Q286.8,139.5 285.8,128.9" stroke="#54402f" stroke-width="2.0" opacity="0.14"/>
<path d="M296.5,158.1 Q294.2,144.0 294.6,128.9" stroke="#241914" stroke-width="1.2" opacity="0.16"/>
<path d="M282.8,156.3 Q277.4,141.2 276.2,131.0" stroke="#1a120e" stroke-width="1.3" opacity="0.12"/>
<path d="M296.6,160.0 Q294.6,141.7 294.5,127.4" stroke="#5e4638" stroke-width="1.7" opacity="0.23"/>
<path d="M290.2,154.1 Q287.0,139.2 279.2,122.2" stroke="#5e4638" stroke-width="1.4" opacity="0.17"/>
<path d="M299.9,162.0 Q303.3,150.3 301.7,135.0" stroke="#54402f" stroke-width="1.0" opacity="0.26"/>
<path d="M301.1,161.9 Q307.2,154.0 306.4,142.8" stroke="#1a120e" stroke-width="2.3" opacity="0.31"/>
<path d="M295.9,162.3 Q294.8,143.8 286.2,132.0" stroke="#4a372b" stroke-width="2.1" opacity="0.29"/>
<path d="M298.3,161.2 Q295.8,146.2 288.9,136.3" stroke="#5e4638" stroke-width="2.0" opacity="0.18"/>
<path d="M298.6,160.1 Q299.0,141.5 295.1,129.6" stroke="#1f1511" stroke-width="1.8" opacity="0.24"/>
<path d="M303.3,169.3 Q295.4,145.8 295.3,126.8" stroke="#241914" stroke-width="1.4" opacity="0.18"/>
<path d="M303.1,163.7 Q302.4,147.7 309.1,134.8" stroke="#4a372b" stroke-width="1.5" opacity="0.12"/>
<path d="M306.3,174.2 Q305.7,155.6 306.4,140.7" stroke="#241914" stroke-width="1.1" opacity="0.19"/>
<path d="M308.1,167.3 Q310.0,155.1 307.1,142.1" stroke="#1a120e" stroke-width="1.1" opacity="0.22"/>
<path d="M303.7,161.5 Q303.1,147.8 303.0,139.0" stroke="#1f1511" stroke-width="1.2" opacity="0.24"/>
<path d="M309.1,166.5 Q308.4,145.9 301.1,132.6" stroke="#1a120e" stroke-width="1.2" opacity="0.20"/>
<path d="M301.4,158.7 Q294.7,144.5 295.2,137.5" stroke="#241914" stroke-width="1.7" opacity="0.26"/>
<path d="M307.1,162.8 Q301.3,138.7 298.2,120.3" stroke="#1a120e" stroke-width="2.1" opacity="0.13"/>
<path d="M313.4,167.6 Q310.6,150.9 314.1,141.3" stroke="#5e4638" stroke-width="1.5" opacity="0.31"/>
<path d="M314.3,167.8 Q317.2,161.6 322.3,153.6" stroke="#241914" stroke-width="1.1" opacity="0.26"/>
<path d="M312.0,172.8 Q313.0,158.2 316.8,142.7" stroke="#241914" stroke-width="1.0" opacity="0.20"/>
<path d="M314.3,181.4 Q310.5,154.2 301.8,134.4" stroke="#54402f" stroke-width="2.1" opacity="0.30"/>
<path d="M315.0,181.7 Q317.6,154.3 318.4,131.7" stroke="#4a372b" stroke-width="2.0" opacity="0.30"/>
<path d="M313.3,174.8 Q311.3,155.2 304.3,132.2" stroke="#5e4638" stroke-width="1.0" opacity="0.17"/>
<path d="M320.9,177.9 Q321.5,164.5 326.1,154.0" stroke="#241914" stroke-width="1.2" opacity="0.22"/>
<path d="M316.4,173.8 Q319.7,154.4 321.3,139.1" stroke="#1f1511" stroke-width="1.7" opacity="0.28"/>
<path d="M319.6,187.2 Q313.5,164.0 312.9,143.9" stroke="#4a372b" stroke-width="1.1" opacity="0.23"/>
<path d="M319.2,176.8 Q322.7,152.7 318.3,133.5" stroke="#5e4638" stroke-width="1.3" opacity="0.20"/>
<path d="M321.0,193.4 Q320.9,170.2 318.9,147.0" stroke="#4a372b" stroke-width="1.8" opacity="0.27"/>
<path d="M318.9,187.6 Q321.9,169.2 326.9,150.0" stroke="#54402f" stroke-width="1.7" opacity="0.16"/>
<path d="M319.7,190.0 Q318.2,159.4 321.7,136.0" stroke="#1f1511" stroke-width="2.5" opacity="0.22"/>
<path d="M321.3,185.9 Q318.3,158.6 321.7,133.7" stroke="#54402f" stroke-width="2.3" opacity="0.30"/>
<path d="M320.4,191.5 Q324.6,179.0 327.2,164.5" stroke="#54402f" stroke-width="2.4" opacity="0.19"/>
<path d="M326.7,193.5 Q336.1,173.8 342.9,162.1" stroke="#4a372b" stroke-width="1.9" opacity="0.24"/>
<path d="M322.7,193.8 Q320.0,173.5 322.1,158.2" stroke="#1a120e" stroke-width="2.1" opacity="0.30"/>
<path d="M324.7,195.0 Q330.7,175.9 334.7,163.9" stroke="#5e4638" stroke-width="2.2" opacity="0.23"/>
<path d="M323.4,199.5 Q330.6,182.7 337.1,166.2" stroke="#5e4638" stroke-width="2.0" opacity="0.20"/>
<path d="M331.8,195.4 Q336.4,176.5 342.3,165.0" stroke="#4a372b" stroke-width="1.8" opacity="0.19"/>
<path d="M327.1,194.4 Q324.9,162.4 324.9,136.1" stroke="#4a372b" stroke-width="1.6" opacity="0.31"/>
<path d="M329.8,208.2 Q331.6,181.0 335.0,151.3" stroke="#241914" stroke-width="2.2" opacity="0.15"/>
<path d="M326.6,205.6 Q338.0,188.6 351.1,172.6" stroke="#1f1511" stroke-width="2.1" opacity="0.15"/>
<path d="M329.7,214.0 Q331.0,194.4 339.2,178.3" stroke="#54402f" stroke-width="1.5" opacity="0.29"/>
<path d="M329.1,206.7 Q340.1,188.0 348.9,176.2" stroke="#4a372b" stroke-width="1.9" opacity="0.28"/>
<path d="M331.8,206.2 Q334.5,185.4 342.2,167.0" stroke="#1a120e" stroke-width="1.3" opacity="0.20"/>
<path d="M333.5,218.3 Q333.8,199.7 338.2,180.5" stroke="#54402f" stroke-width="1.1" opacity="0.23"/>
<path d="M329.8,215.1 Q339.8,195.9 349.1,177.2" stroke="#1f1511" stroke-width="2.0" opacity="0.18"/>
<path d="M332.9,214.7 Q340.7,197.4 348.5,185.9" stroke="#5e4638" stroke-width="1.9" opacity="0.22"/>
<path d="M337.4,214.1 Q346.8,197.0 356.8,185.8" stroke="#241914" stroke-width="1.6" opacity="0.13"/>
<path d="M335.1,221.2 Q345.1,201.3 355.2,181.5" stroke="#5e4638" stroke-width="2.0" opacity="0.14"/>
<path d="M334.2,228.5 Q349.5,209.5 358.4,190.6" stroke="#54402f" stroke-width="1.0" opacity="0.13"/>
<path d="M336.3,231.5 Q340.3,195.9 344.4,156.8" stroke="#54402f" stroke-width="2.0" opacity="0.26"/>
<path d="M336.9,213.1 Q339.1,190.4 345.2,171.9" stroke="#1a120e" stroke-width="1.4" opacity="0.28"/>
<path d="M336.7,221.4 Q343.2,195.6 354.4,174.7" stroke="#1a120e" stroke-width="1.4" opacity="0.19"/>
<path d="M336.8,225.3 Q341.7,199.8 350.1,178.3" stroke="#241914" stroke-width="1.3" opacity="0.28"/>
<path d="M334.0,229.1 Q351.8,212.0 362.1,197.4" stroke="#1a120e" stroke-width="1.9" opacity="0.30"/>
<path d="M341.7,218.2 Q347.7,204.7 355.4,189.6" stroke="#1f1511" stroke-width="1.6" opacity="0.19"/>
<path d="M338.2,231.2 Q342.6,218.0 351.3,205.5" stroke="#5e4638" stroke-width="1.4" opacity="0.22"/>
<path d="M345.7,233.5 Q357.5,222.5 365.6,210.5" stroke="#54402f" stroke-width="1.2" opacity="0.24"/>
<path d="M342.9,238.0 Q349.8,214.8 362.6,196.8" stroke="#4a372b" stroke-width="1.1" opacity="0.13"/>
<path d="M344.9,246.2 Q352.4,224.5 359.3,205.9" stroke="#1f1511" stroke-width="1.9" opacity="0.16"/>
<path d="M344.1,249.0 Q352.5,236.7 356.1,223.8" stroke="#241914" stroke-width="1.1" opacity="0.25"/>
<path d="M346.7,236.9 Q351.9,219.3 364.3,199.9" stroke="#1f1511" stroke-width="1.9" opacity="0.24"/>
<path d="M349.5,244.4 Q357.8,230.0 359.6,223.1" stroke="#1a120e" stroke-width="1.0" opacity="0.16"/>
<path d="M345.3,229.6 Q349.0,216.7 350.8,203.9" stroke="#54402f" stroke-width="1.2" opacity="0.16"/>
<path d="M349.1,246.5 Q356.3,234.0 361.7,223.5" stroke="#5e4638" stroke-width="1.5" opacity="0.13"/>
<path d="M345.0,253.9 Q357.6,236.0 366.2,220.5" stroke="#4a372b" stroke-width="2.0" opacity="0.16"/>
<path d="M342.8,245.1 Q347.6,232.8 355.0,219.4" stroke="#4a372b" stroke-width="2.4" opacity="0.17"/></g>
<path d="M196,165 C208,148 226,138 250,133" stroke="#6a5040" stroke-width="1.5" opacity="0.5" filter="url(#b05)"/>
<path d="M206,160 C222,146 245,140 268,139" stroke="#644a3b" stroke-width="1.3" opacity="0.45" filter="url(#b05)"/>
<path d="M214,150 C232,136 255,130 280,131" stroke="#6e5343" stroke-width="1.4" opacity="0.45" filter="url(#b05)"/>
<path d="M226,154 C248,146 270,145 292,150" stroke="#5e4536" stroke-width="1.5" opacity="0.4" filter="url(#b05)"/>
<path d="M240,125 C260,121 282,123 302,131" stroke="#5a4234" stroke-width="1.2" opacity="0.4" filter="url(#b05)"/>
<path d="M200,175 C212,160 230,152 255,150" stroke="#6a4f3f" stroke-width="1.2" opacity="0.35" filter="url(#b05)"/>

</g>
<path d="M184.5,178 C184,190 184.5,202 186,214" stroke="#5a4032" stroke-width="4" fill="none" opacity="0.45" filter="url(#b1)"/>
<!-- brows -->
<path d="M185.0,227.0 C186.0,225.2 189.2,224.2 192.0,223.5 C194.8,222.8 199.0,222.5 202.0,222.5 C205.0,222.5 207.8,222.8 210.0,223.5 C212.2,224.2 214.5,225.6 215.0,226.5 C215.5,227.4 214.7,228.4 213.0,229.0 C211.3,229.6 208.0,229.5 205.0,230.0 C202.0,230.5 198.2,231.3 195.0,232.0 C191.8,232.7 187.7,234.8 186.0,234.0 C184.3,233.2 184.0,228.8 185.0,227.0 Z" fill="#38281f" opacity="0.92" filter="url(#b1)"/>
<path d="M242.0,223.5 C242.0,221.9 246.3,218.2 250.0,216.5 C253.7,214.8 258.5,213.5 264.0,213.0 C269.5,212.5 277.5,212.5 283.0,213.5 C288.5,214.5 293.3,216.6 297.0,219.0 C300.7,221.4 304.2,226.3 305.0,228.0 C305.8,229.7 304.2,229.7 302.0,229.0 C299.8,228.3 295.7,225.3 292.0,224.0 C288.3,222.7 284.7,221.4 280.0,221.0 C275.3,220.6 269.0,220.7 264.0,221.5 C259.0,222.3 253.7,225.7 250.0,226.0 C246.3,226.3 242.0,225.1 242.0,223.5 Z" fill="#38281f" opacity="0.92" filter="url(#b1)"/>
<!-- eyes -->
<path d="M189,247 C196,239 208,237 219,242" stroke="#a87664" stroke-width="3" fill="none" opacity="0.5" filter="url(#b1)"/>
<path d="M256,237 C266,230 280,228 297,236" stroke="#a87664" stroke-width="3" fill="none" opacity="0.5" filter="url(#b1)"/>
<path d="M189.0,252.0 C189.3,250.5 192.5,246.7 195.0,245.0 C197.5,243.3 201.0,242.4 204.0,242.0 C207.0,241.6 210.5,241.8 213.0,242.5 C215.5,243.2 219.0,244.7 219.0,246.0 C219.0,247.3 215.8,249.3 213.0,250.5 C210.2,251.7 205.3,252.4 202.0,253.0 C198.7,253.6 195.2,254.2 193.0,254.0 C190.8,253.8 188.7,253.5 189.0,252.0 Z" fill="#d2b0a4" filter="url(#b05)"/>
<ellipse cx="202.5" cy="247.5" rx="5.8" ry="5" fill="url(#eyeg)" filter="url(#b05)"/>
<path d="M189,250 C195,243 206,241 217,244.5" stroke="#2a1a16" stroke-width="2.6" fill="none" filter="url(#b05)"/>
<path d="M256.0,241.0 C256.3,239.8 261.2,236.8 264.0,235.5 C266.8,234.2 269.7,233.2 273.0,233.0 C276.3,232.8 280.0,233.2 284.0,234.5 C288.0,235.8 296.8,239.2 297.0,240.5 C297.2,241.8 289.2,242.0 285.0,242.5 C280.8,243.0 275.8,243.4 272.0,243.5 C268.2,243.6 264.7,243.4 262.0,243.0 C259.3,242.6 255.7,242.2 256.0,241.0 Z" fill="#d2b0a4" filter="url(#b05)"/>
<ellipse cx="273.5" cy="238.5" rx="6.3" ry="4.8" fill="url(#eyeg)" filter="url(#b05)"/>
<path d="M256,240.5 C265,234 278,231.5 297,240" stroke="#2a1a16" stroke-width="2.6" fill="none" filter="url(#b05)"/>
<circle cx="275.5" cy="236.5" r="0.9" fill="#f0e0d8" opacity="0.8"/>
<circle cx="205" cy="246" r="0.9" fill="#f0e0d8" opacity="0.8"/>
<!-- lips -->
<path d="M213.0,310.5 C210.0,309.4 218.8,304.7 222.0,303.0 C225.2,301.3 228.7,300.8 232.0,300.5 C235.3,300.2 238.7,300.6 242.0,301.0 C245.3,301.4 248.4,301.8 252.0,303.0 C255.6,304.2 265.5,307.4 263.5,308.5 C261.5,309.6 248.4,309.2 240.0,309.5 C231.6,309.8 216.0,311.6 213.0,310.5 Z" fill="#bf7d71" filter="url(#b1)"/>
<path d="M215.0,311.5 C218.3,310.4 232.2,309.8 240.0,309.5 C247.8,309.2 259.0,308.6 262.0,309.5 C265.0,310.4 260.7,313.5 258.0,315.0 C255.3,316.5 250.7,317.8 246.0,318.5 C241.3,319.2 234.3,319.4 230.0,319.0 C225.7,318.6 222.5,317.2 220.0,316.0 C217.5,314.8 211.7,312.6 215.0,311.5 Z" fill="#d79a8c" filter="url(#b1)"/>
<path d="M213,310.5 C228,309 248,308.5 263.5,308.5" stroke="#a06a60" stroke-width="1.2" fill="none" filter="url(#b05)"/>
<!-- shirt -->
<path d="M20.0,600.0 C-22.3,587.8 24.0,559.0 26.0,547.0 C28.0,535.0 29.7,534.8 32.0,528.0 C34.3,521.2 35.6,515.9 40.0,506.1 C44.4,496.4 52.2,479.9 58.3,469.5 C64.4,459.1 70.1,449.9 76.6,443.4 C83.1,436.9 89.7,434.2 97.5,430.3 C105.3,426.4 114.0,423.2 123.6,419.9 C133.2,416.6 145.0,414.2 155.0,410.7 C165.0,407.2 175.4,402.6 183.7,399.0 C192.0,395.4 199.2,392.2 205.0,389.0 C210.8,385.8 216.4,374.8 218.5,380.0 C220.6,385.2 214.2,411.7 217.3,420.5 C220.4,429.3 229.9,429.3 237.0,432.9 C244.1,436.5 254.1,440.3 259.6,442.2 C265.1,444.1 264.1,445.2 270.0,444.3 C275.9,443.4 286.1,441.6 294.7,437.0 C303.3,432.4 314.3,423.9 321.5,416.4 C328.7,408.8 334.9,398.9 338.0,391.7 C341.1,384.5 337.9,374.9 340.1,373.1 C342.3,371.3 343.7,377.4 351.3,381.1 C358.9,384.9 374.9,390.8 386.0,395.6 C397.1,400.4 408.2,405.4 417.8,410.0 C427.4,414.6 435.6,418.4 443.8,423.0 C452.0,427.6 459.7,432.2 466.9,437.5 C474.1,442.8 481.3,448.6 487.1,454.8 C492.9,461.1 496.8,467.3 501.6,475.0 C506.4,482.7 511.7,492.8 516.0,501.0 C520.3,509.2 524.1,516.4 527.6,524.1 C531.1,531.8 534.1,534.4 537.0,547.0 C539.9,559.6 587.8,587.8 545.0,600.0 C502.2,612.2 367.5,620.0 280.0,620.0 C192.5,620.0 62.3,612.2 20.0,600.0 Z" fill="#2a3030" filter="url(#b05)"/>
<g clip-path="url(#shirtclip)" fill="none">
<path d="M80,445 C120,425 165,412 212,390" stroke="#3b4242" stroke-width="10" opacity="0.55" filter="url(#b4)"/>
<path d="M350,392 C400,410 450,430 492,466" stroke="#3b4242" stroke-width="10" opacity="0.55" filter="url(#b4)"/>
<path d="M350,400 C400,418 445,438 480,470" stroke="#252a2a" stroke-width="2" opacity="0.6" filter="url(#b1)"/>
<path d="M75,448 C80,490 85,520 88,547" stroke="#252a2a" stroke-width="2" opacity="0.6" filter="url(#b1)"/>
<path d="M500,475 C490,500 480,525 476,547" stroke="#252a2a" stroke-width="2" opacity="0.5" filter="url(#b1)"/>
<path d="M264,450 C262,480 262,515 263,547" stroke="#252a2a" stroke-width="2" opacity="0.5" filter="url(#b1)"/>
<path d="M130,470 C170,500 200,520 230,547" stroke="#343b3b" stroke-width="14" opacity="0.35" filter="url(#b4)"/>
<rect x="0" y="370" width="547" height="177" filter="url(#noise)" opacity="0.045"/>
<path d="M218.5,380.0 C219.4,386.8 214.2,411.7 217.3,420.5 C220.4,429.3 229.9,429.3 237.0,432.9 C244.1,436.5 254.1,440.3 259.6,442.2 C265.1,444.1 264.1,445.2 270.0,444.3 C275.9,443.4 286.1,441.6 294.7,437.0 C303.3,432.4 314.3,423.9 321.5,416.4 C328.7,408.8 334.9,398.9 338.0,391.7 C341.1,384.5 338.8,375.1 340.1,373.1 C341.4,371.2 345.4,375.5 346.0,380.0 C346.6,384.5 346.7,392.5 344.0,400.0 C341.3,407.5 337.3,417.0 330.0,425.0 C322.7,433.0 310.3,443.5 300.0,448.0 C289.7,452.5 278.0,452.7 268.0,452.0 C258.0,451.3 249.0,448.0 240.0,444.0 C231.0,440.0 219.0,435.3 214.0,428.0 C209.0,420.7 210.3,408.0 210.0,400.0 C209.7,392.0 210.6,383.3 212.0,380.0 C213.4,376.7 217.6,373.2 218.5,380.0 Z" fill="#272c2c" opacity="0.7" filter="url(#b1)"/>
<path d="M214,428 C235,446 270,456 300,448 C325,432 342,412 346,385" stroke="#3a4141" stroke-width="1.5" opacity="0.6" filter="url(#b05)"/>
</g>
<!-- buttons -->
<circle cx="259" cy="447.6" r="5" fill="#2b4350" filter="url(#b05)"/>
<circle cx="259" cy="447.6" r="3.2" fill="#213642" opacity="0.8"/>
<circle cx="257.8" cy="446.3" r="1.2" fill="#5a7a88" opacity="0.6"/>
<circle cx="263.5" cy="489" r="5" fill="#2b4350" filter="url(#b05)"/>
<circle cx="263.5" cy="489" r="3.2" fill="#213642" opacity="0.8"/>
<circle cx="262.3" cy="487.7" r="1.2" fill="#5a7a88" opacity="0.6"/>
<rect x="274" y="442.5" width="10" height="4" rx="2" fill="none" stroke="#56625f" stroke-width="1"/>
<!-- selection -->
<path d="M17.8,546.5 L17.8,545.3 L16.5,516.6 L19.1,500.9 L32.1,490.5 L45.2,468.2 L49.1,451.3 L58.3,435.6 L75.3,421.2 L77.9,412.0 L92.3,404.2 L105.3,400.3 L134.1,396.4 L148.4,389.8 L166.7,389.8 L178.4,378.4 L182.5,370.2 L181.1,315.1 L177.0,293.1 L170.1,271.0 L169.4,142.4 L176.1,126.3 L185.5,115.6 L204.3,104.9 L219.0,90.1 L228.4,86.6 L249.9,84.8 L268.7,88.8 L295.5,91.5 L322.4,98.2 L333.1,110.2 L338.5,126.3 L351.9,142.4 L370.6,166.6 L386.8,190.7 L393.5,206.8 L395.8,232.5 L391.7,260.0 L375.2,284.8 L364.2,304.1 L360.0,320.6 L361.4,348.1 L365.8,356.6 L380.2,371.0 L400.5,379.7 L426.5,389.8 L458.3,405.7 L487.1,424.5 L507.4,446.1 L524.7,469.2 L537.7,489.5 L543.5,509.7 L544.9,544.4 L544.9,546.5 Z" fill="none" stroke="#ffffff" stroke-width="1"/>
<path d="M17.8,546.5 L17.8,545.3 L16.5,516.6 L19.1,500.9 L32.1,490.5 L45.2,468.2 L49.1,451.3 L58.3,435.6 L75.3,421.2 L77.9,412.0 L92.3,404.2 L105.3,400.3 L134.1,396.4 L148.4,389.8 L166.7,389.8 L178.4,378.4 L182.5,370.2 L181.1,315.1 L177.0,293.1 L170.1,271.0 L169.4,142.4 L176.1,126.3 L185.5,115.6 L204.3,104.9 L219.0,90.1 L228.4,86.6 L249.9,84.8 L268.7,88.8 L295.5,91.5 L322.4,98.2 L333.1,110.2 L338.5,126.3 L351.9,142.4 L370.6,166.6 L386.8,190.7 L393.5,206.8 L395.8,232.5 L391.7,260.0 L375.2,284.8 L364.2,304.1 L360.0,320.6 L361.4,348.1 L365.8,356.6 L380.2,371.0 L400.5,379.7 L426.5,389.8 L458.3,405.7 L487.1,424.5 L507.4,446.1 L524.7,469.2 L537.7,489.5 L543.5,509.7 L544.9,544.4 L544.9,546.5 Z" fill="none" stroke="#000" stroke-width="1" stroke-dasharray="4 4"/>
</svg>


</body></html>
